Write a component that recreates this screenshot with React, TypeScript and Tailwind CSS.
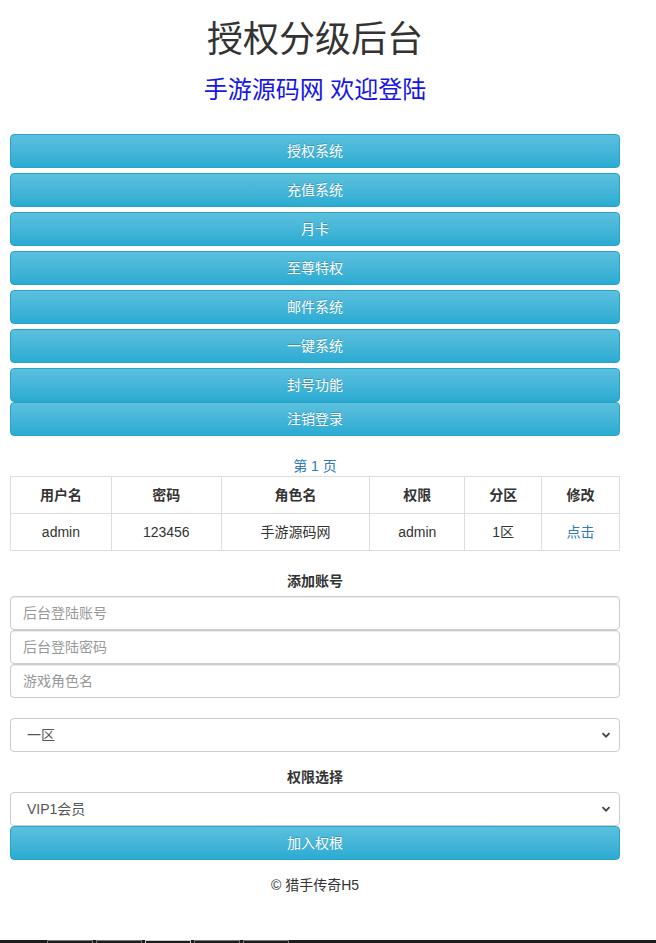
import { FC } from "react";

const font = {
  fontFamily: '"Liberation Sans", "Noto Sans CJK SC", sans-serif',
};

const menu = ["授权系统", "充值系统", "月卡", "至尊特权", "邮件系统", "一键系统", "封号功能"];

const btn =
  "flex h-[34px] w-full items-center justify-center rounded-[4px] border border-[#28a4c9] bg-gradient-to-b from-[#5bc0de] to-[#2aabd2] text-[14px] text-white [text-shadow:0_-1px_0_rgba(0,0,0,0.2)]";

const Chevron: FC = () => (
  <svg
    className="pointer-events-none absolute right-[8px] top-1/2 size-[10px] -translate-y-1/2"
    viewBox="0 0 10 10"
    fill="none"
    aria-hidden="true"
  >
    <path d="M1.5 3.2 5 6.7l3.5-3.5" stroke="#444" strokeWidth="1.8" />
  </svg>
);

const Select: FC<{ value: string }> = ({ value }) => (
  <div className="relative h-[34px] w-full rounded-[4px] border border-[#ccc] bg-white">
    <div className="flex h-full items-center pl-[16px] text-[14px] text-[#555]">
      {value}
    </div>
    <Chevron />
  </div>
);

const Input: FC<{ placeholder: string }> = ({ placeholder }) => (
  <input
    className="h-[34px] w-full rounded-[4px] border border-[#ccc] bg-white px-[12px] text-[14px] text-[#555] shadow-[inset_0_1px_1px_rgba(0,0,0,0.075)] outline-none placeholder:text-[#999]"
    placeholder={placeholder}
  />
);

const cols = ["用户名", "密码", "角色名", "权限", "分区", "修改"];
const widths = ["w-[101px]", "w-[110px]", "w-[149px]", "w-[95px]", "w-[77px]", "w-[78px]"];
const row = ["admin", "123456", "手游源码网", "admin", "1区"];

export default function App() {
  return (
    <div className="flex h-[943px] flex-col overflow-hidden bg-white text-[#333]" style={font}>
      <div className="w-[630px] px-[10px]">
        <h1 className="mt-[20px] text-center text-[36px] leading-[40px] text-[#333]">
          授权分级后台
        </h1>
        <h3 className="mt-[17px] text-center text-[24px] leading-[26px] text-[#1515e8]">
          手游源码网 欢迎登陆
        </h3>

        {/* menu buttons */}
        <div className="mt-[31px] flex flex-col gap-[5px]">
          {menu.map((m) => (
            <button key={m} type="button" className={btn}>
              {m}
            </button>
          ))}
        </div>
        <button type="button" className={btn}>
          注销登录
        </button>

        <p className="mt-[20px] text-center text-[14px] leading-[20px] text-[#337ab7]">
          第 1 页
        </p>
        <table className="w-full border-collapse text-[14px]">
          <thead>
            <tr>
              {cols.map((c, i) => (
                <th
                  key={c}
                  className={`${widths[i]} h-[37px] border border-[#ddd] p-0 text-center font-bold`}
                >
                  {c}
                </th>
              ))}
            </tr>
          </thead>
          <tbody>
            <tr>
              {row.map((c, i) => (
                <td key={i} className="h-[37px] border border-[#ddd] p-0 text-center">
                  {c}
                </td>
              ))}
              <td className="h-[37px] border border-[#ddd] p-0 text-center text-[#337ab7]">
                点击
              </td>
            </tr>
          </tbody>
        </table>

        {/* add account form */}
        <p className="mt-[20px] text-center text-[14px] font-bold leading-[20px]">添加账号</p>
        <div className="mt-[5px] flex flex-col">
          <Input placeholder="后台登陆账号" />
          <Input placeholder="后台登陆密码" />
          <Input placeholder="游戏角色名" />
        </div>
        <div className="mt-[20px]">
          <Select value="一区" />
        </div>
        <p className="mt-[15px] text-center text-[14px] font-bold leading-[20px]">权限选择</p>
        <div className="mt-[5px]">
          <Select value="VIP1会员" />
        </div>
        <button type="button" className={btn}>
          加入权根
        </button>

        <p className="mt-[15px] text-center text-[14px] leading-[20px]">© 猎手传奇H5</p>
      </div>

      {/* taskbar strip */}
      <div className="mt-auto flex h-[3px] gap-[3px] bg-[#1c1c1c] pl-[47px]">
        <div className="w-[46px] border-x border-t border-[#777]" />
        <div className="w-[46px] border-x border-t border-[#777]" />
        <div className="w-[46px] border-x border-t border-[#ccc]" />
        <div className="w-[46px] border-x border-t border-[#777]" />
        <div className="w-[46px] border-x border-t border-[#777]" />
      </div>
    </div>
  );
}
